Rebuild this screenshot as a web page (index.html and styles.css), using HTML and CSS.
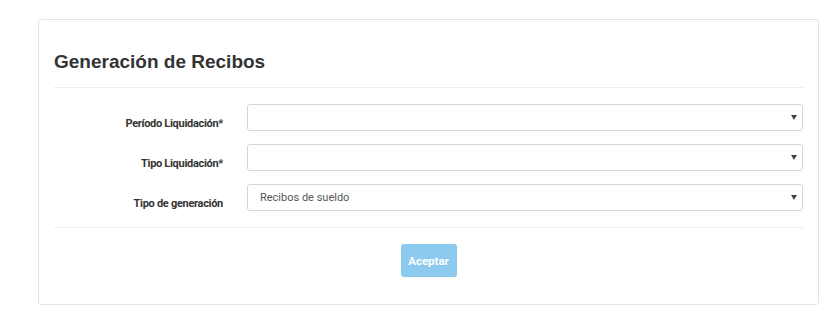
FILE: index.html
```html
<!DOCTYPE html>
<html lang="es">
<head>
    <meta charset="UTF-8">
    <meta name="viewport" content="width=device-width, initial-scale=1.0">
    <title>Generación de Recibos</title>
    <link rel="stylesheet" href="styles.css">
</head>
<body>
    <div class="panel">
        <h2 class="panel-title">Generación de Recibos</h2>

        <form class="recibos-form">
            <div class="form-row">
                <label for="periodo">Período Liquidación*</label>
                <div class="select-wrap">
                    <select id="periodo">
                        <option value=""></option>
                    </select>
                </div>
            </div>

            <div class="form-row">
                <label for="tipo">Tipo Liquidación*</label>
                <div class="select-wrap">
                    <select id="tipo">
                        <option value=""></option>
                    </select>
                </div>
            </div>

            <div class="form-row">
                <label for="generacion">Tipo de generación</label>
                <div class="select-wrap">
                    <select id="generacion">
                        <option value="sueldo">Recibos de sueldo</option>
                    </select>
                </div>
            </div>

            <div class="form-footer">
                <button type="submit" class="btn-primary" disabled>Aceptar</button>
            </div>
        </form>
    </div>
</body>
</html>
```

FILE: styles.css
```css
/* Generación de Recibos */
body {
    font-family: Roboto, "Liberation Sans", Arial, sans-serif;
    background-color: #fff;
    margin: 0;
    padding: 19px 20px 0 38px;
}

.panel {
    width: 781px;
    box-sizing: border-box;
    height: 286px;
    border: 1px solid #e3e3e3;
    border-radius: 3px;
    padding: 0 15px;
}

.panel-title {
    font-family: "Liberation Sans", Arial, sans-serif;
    font-size: 19px;
    font-weight: bold;
    color: #333;
    margin: 0;
    padding: 30px 0 14px;
    line-height: 23px;
    border-bottom: 1px solid #eee;
}

.recibos-form {
    padding-top: 16px;
}

.form-row {
    display: grid;
    grid-template-columns: 193px 1fr;
    align-items: center;
    margin-bottom: 13px;
}

.form-row label {
    font-size: 11px;
    font-weight: bold;
    letter-spacing: -0.3px;
    color: #333;
    text-align: right;
    padding-right: 24px;
    padding-top: 11px;
}

.select-wrap {
    position: relative;
}

.select-wrap::after {
    content: "";
    position: absolute;
    right: 6px;
    top: 11px;
    border-left: 3px solid transparent;
    border-right: 3px solid transparent;
    border-top: 5px solid #444;
}

.select-wrap select {
    appearance: none;
    -webkit-appearance: none;
    width: 100%;
    height: 27px;
    border: 1px solid #d6d6d6;
    border-radius: 3px;
    background-color: #fff;
    font-family: Roboto, "Liberation Sans", Arial, sans-serif;
    font-size: 11px;
    color: #555;
    padding: 0 12px;
}

.form-footer {
    border-top: 1px solid #eee;
    margin-top: 16px;
    padding-top: 16px;
    text-align: center;
}

.btn-primary {
    background-color: #8dcaf0;
    color: #fff;
    border: none;
    border-radius: 3px;
    width: 56px;
    height: 33px;
    font-family: Roboto, "Liberation Sans", Arial, sans-serif;
    font-size: 11.5px;
    font-weight: bold;
    padding: 0;
}
```
